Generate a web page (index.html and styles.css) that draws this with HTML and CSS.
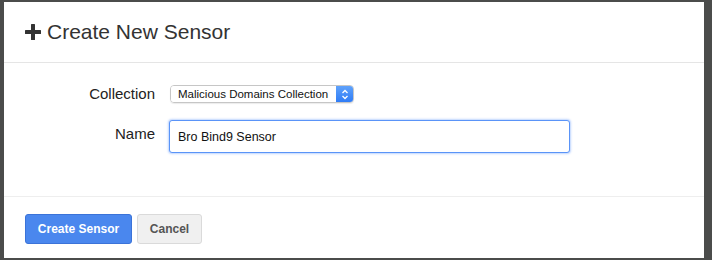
FILE: index.html
```html
<!DOCTYPE html>
<html lang="en">
<head>
    <meta charset="UTF-8">
    <meta name="viewport" content="width=device-width, initial-scale=1.0">
    <title>Create New Sensor</title>
    <link rel="stylesheet" href="styles.css">
</head>
<body>

<!-- Модальне вікно створення сенсора -->
<div class="modal">
    <div class="modal-header">
        <h2 class="modal-title">
            <svg class="icon-plus" width="16" height="16" viewBox="0 0 16 16">
                <rect x="6" y="0" width="4" height="16" rx="0.5"/>
                <rect x="0" y="6" width="16" height="4" rx="0.5"/>
            </svg>
            Create New Sensor
        </h2>
    </div>

    <form class="modal-body">
        <label class="form-label" for="collection">Collection</label>
        <div class="form-control">
            <div class="select-box">
                <select id="collection">
                    <option>Malicious Domains Collection</option>
                </select>
                <span class="select-arrow">
                    <svg width="8" height="11" viewBox="0 0 8 11">
                        <path d="M1.5 4 L4 1.5 L6.5 4 M1.5 7 L4 9.5 L6.5 7" fill="none" stroke="#fff" stroke-width="1.3"/>
                    </svg>
                </span>
            </div>
        </div>

        <label class="form-label label-name" for="name">Name</label>
        <div class="form-control">
            <input type="text" id="name" class="text-input" value="Bro Bind9 Sensor">
        </div>
    </form>

    <div class="modal-footer">
        <button class="btn btn-primary">Create Sensor</button>
        <button class="btn btn-default">Cancel</button>
    </div>
</div>

</body>
</html>
```

FILE: styles.css
```css
body {
    margin: 0;
    padding: 2px 8px 2px 4px;
    background-color: #4b4c4b;
    font-family: "Liberation Sans", Arial, sans-serif;
}
.modal {
    background-color: #fff;
    height: 256px;
    display: flex;
    flex-direction: column;
}
.modal-header {
    height: 60px;
    border-bottom: 1px solid #e5e5e5;
    display: flex;
    align-items: center;
    padding-left: 21px;
}
.modal-title {
    margin: 0;
    font-size: 21px;
    font-weight: normal;
    color: #333;
    display: flex;
    align-items: center;
    gap: 6px;
}
.icon-plus {
    fill: #333;
}
.modal-body {
    display: grid;
    grid-template-columns: 130px 401px;
    column-gap: 14px;
    row-gap: 17px;
    padding: 22px 0 43px 21px;
    border-bottom: 1px solid #eee;
}
.form-label {
    font-size: 15px;
    line-height: 18px;
    color: #222;
    text-align: right;
    align-self: center;
}
.label-name {
    margin-top: -5px;
}
.select-box {
    display: inline-flex;
    margin-left: 1px;
    height: 16px;
    border: 1px solid #c6c6c6;
    border-radius: 4px;
    box-shadow: 0 1px 1px rgba(0, 0, 0, 0.08);
    overflow: hidden;
    vertical-align: top;
}
.form-control {
    line-height: 0;
}
.select-box select {
    appearance: none;
    -webkit-appearance: none;
    border: none;
    outline: none;
    background: #fff;
    font-family: "Liberation Sans", Arial, sans-serif;
    font-size: 11.5px;
    color: #111;
    width: 165px;
    padding: 0 0 0 7px;
    margin: 0;
}
.select-arrow {
    width: 17px;
    background: linear-gradient(#5fa2fb, #2f7cf6);
    display: flex;
    align-items: center;
    justify-content: center;
}
.text-input {
    box-sizing: border-box;
    width: 401px;
    height: 33px;
    padding: 0 8px;
    border: 1px solid #5a94f8;
    border-radius: 3px;
    box-shadow: 0 0 2px 1px rgba(110, 160, 250, 0.45);
    outline: none;
    font-family: "Liberation Sans", Arial, sans-serif;
    font-size: 12.5px;
    color: #111;
}
.modal-footer {
    display: flex;
    gap: 5px;
    padding: 17px 0 0 21px;
}
.btn {
    height: 30px;
    padding: 0;
    border-radius: 3px;
    font-family: "Liberation Sans", Arial, sans-serif;
    font-size: 12px;
    font-weight: bold;
    white-space: nowrap;
}
.btn-primary {
    width: 107px;
    background-color: #4a87ee;
    border: 1px solid #3b73d8;
    color: #fff;
}
.btn-default {
    width: 65px;
    background-color: #f0f0f0;
    border: 1px solid #dadada;
    color: #555;
}
```
